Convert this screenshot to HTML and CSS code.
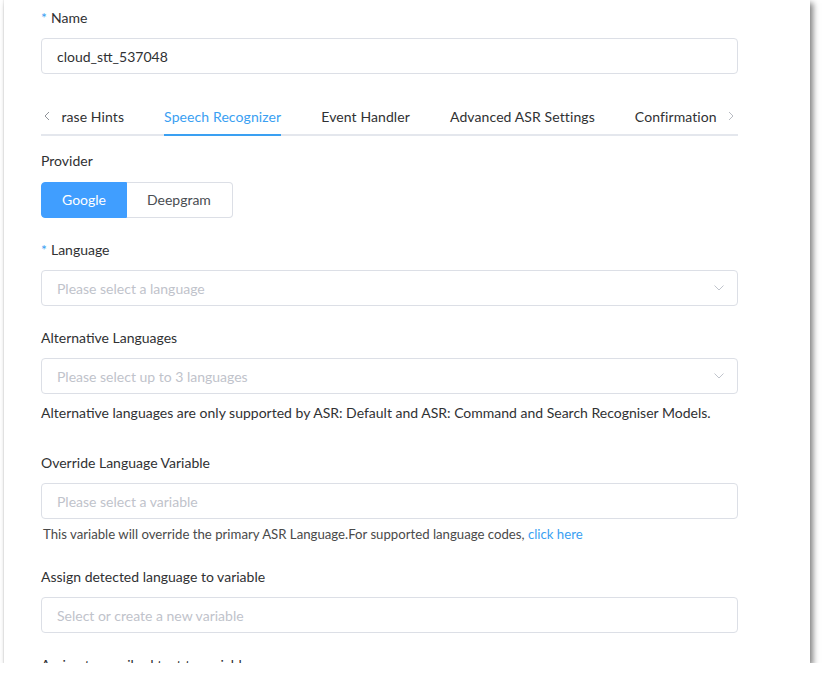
FILE: index.html
```html
<!DOCTYPE html>
<html lang="en">
<head>
<meta charset="utf-8">
<title>Cloud STT</title>
<link rel="stylesheet" href="styles.css">
</head>
<body>
<div class="panel">
  <div class="form-item">
    <div class="label"><span class="req">*</span>Name</div>
    <div class="input"><span class="value">cloud_stt_537048</span></div>
  </div>

  <div class="tabs-header">
    <div class="tab-arrow prev">
      <svg width="6" height="10" viewBox="0 0 6 10"><polyline points="5,1 1,5 5,9" fill="none" stroke="#909399" stroke-width="1"/></svg>
    </div>
    <div class="tabs-scroll">
      <div class="tabs-list">
        <div class="tab">Phrase Hints</div>
        <div class="tab active"><span>Speech Recognizer</span></div>
        <div class="tab">Event Handler</div>
        <div class="tab">Advanced ASR Settings</div>
        <div class="tab">Confirmation</div>
      </div>
    </div>
    <div class="tab-arrow next">
      <svg width="6" height="10" viewBox="0 0 6 10"><polyline points="1,1 5,5 1,9" fill="none" stroke="#b8bbc2" stroke-width="1"/></svg>
    </div>
  </div>

  <div class="tab-content">
    <div class="form-item">
      <div class="label provider-label">Provider</div>
      <div class="radio-group">
        <div class="radio-btn selected">Google</div>
        <div class="radio-btn">Deepgram</div>
      </div>
    </div>

    <div class="form-item">
      <div class="label"><span class="req">*</span>Language</div>
      <div class="input select">
        <span class="placeholder">Please select a language</span>
        <svg class="caret" width="10" height="6" viewBox="0 0 10 6"><polyline points="0.5,0.5 5,5 9.5,0.5" fill="none" stroke="#c0c4cc" stroke-width="1"/></svg>
      </div>
    </div>

    <div class="form-item help-item">
      <div class="label">Alternative Languages</div>
      <div class="input select">
        <span class="placeholder">Please select up to 3 languages</span>
        <svg class="caret" width="10" height="6" viewBox="0 0 10 6"><polyline points="0.5,0.5 5,5 9.5,0.5" fill="none" stroke="#c0c4cc" stroke-width="1"/></svg>
      </div>
      <div class="help">Alternative languages are only supported by ASR: Default and ASR: Command and Search Recogniser Models.</div>
    </div>

    <div class="form-item help-item2">
      <div class="label">Override Language Variable</div>
      <div class="input">
        <span class="placeholder">Please select a variable</span>
      </div>
      <div class="help small">This variable will override the primary ASR Language.For supported language codes, <a class="link">click here</a></div>
    </div>

    <div class="form-item">
      <div class="label">Assign detected language to variable</div>
      <div class="input">
        <span class="placeholder">Select or create a new variable</span>
      </div>
    </div>

    <div class="form-item">
      <div class="label">Assign transcribed text to variable</div>
      <div class="input">
        <span class="placeholder">Select or create a new variable</span>
      </div>
    </div>
  </div>
</div>
</body>
</html>
```

FILE: styles.css
```css
* { box-sizing: border-box; }

html, body {
  margin: 0;
  padding: 0;
  background: #ffffff;
}

body {
  font-family: Lato, "Open Sans", "Liberation Sans", sans-serif;
  font-size: 14px;
  color: #303133;
  overflow: hidden;
}

.panel {
  margin-left: 4px;
  width: 806px;
  height: 663px;
  background: #ffffff;
  overflow: hidden;
  padding: 8px 72px 0 37px;
  box-shadow: 3px 3px 6px rgba(0, 0, 0, 0.5), -1px 0 1px rgba(0, 0, 0, 0.05);
}

.form-item {
  margin-bottom: 22px;
}

.label {
  line-height: 20px;
  font-size: 14px;
  color: #303133;
  margin-bottom: 10px;
}

.provider-label {
  margin-bottom: 11px;
}

.req {
  color: #3aa0f2;
  margin-right: 4px;
}

.input {
  height: 36px;
  border: 1px solid #dcdfe6;
  border-radius: 4px;
  padding: 0 15px;
  display: flex;
  align-items: center;
  justify-content: space-between;
  font-size: 14px;
}

.value {
  color: #303133;
}

.placeholder {
  color: #bfc3cb;
}

.caret {
  margin-right: -2px;
}

/* Tabs */
.tabs-header {
  display: flex;
  height: 40px;
  border-bottom: 2px solid #e4e7ed;
}

.tab-arrow {
  width: 20px;
  height: 38px;
  display: flex;
  align-items: center;
  padding-top: 2px;
}

.tab-arrow.prev {
  justify-content: flex-start;
  padding-left: 3px;
}

.tab-arrow.next {
  justify-content: flex-end;
  padding-right: 4px;
}

.tabs-scroll {
  flex: 1;
  overflow: hidden;
  height: 40px;
  margin-bottom: -2px;
}

.tabs-list {
  display: flex;
  white-space: nowrap;
  transform: translateX(-36px);
}

.tab {
  padding: 0 20px;
  height: 40px;
  line-height: 41px;
  font-size: 14px;
  letter-spacing: 0.1px;
  color: #303133;
  flex: none;
}

.tab.active span {
  display: block;
  height: 40px;
  color: #3aa0f2;
  border-bottom: 2px solid #3aa0f2;
  line-height: 41px;
}

.tab-content {
  margin-top: 15px;
}

/* Radio group */
.radio-group {
  display: flex;
}

.radio-btn {
  height: 36px;
  line-height: 34px;
  padding: 0 20px;
  border: 1px solid #dcdfe6;
  font-size: 14px;
  color: #4a4d52;
}

.radio-btn:first-child {
  border-radius: 4px 0 0 4px;
}

.radio-btn:last-child {
  border-radius: 0 4px 4px 0;
  border-left: none;
  padding-right: 21px;
}

.radio-btn.selected {
  background: #409eff;
  border-color: #409eff;
  color: #ffffff;
}

/* Help texts */
.help {
  margin-top: 9px;
  line-height: 20px;
  font-size: 14px;
  color: #303133;
}

.help.small {
  margin-top: 6px;
  line-height: 18px;
  font-size: 13.2px;
  color: #4a4a4a;
  padding-left: 2px;
}

.help-item {
  margin-bottom: 30px;
}

.help-item2 {
  margin-bottom: 24px;
}

.link {
  color: #3aa0f2;
  text-decoration: none;
}
```
